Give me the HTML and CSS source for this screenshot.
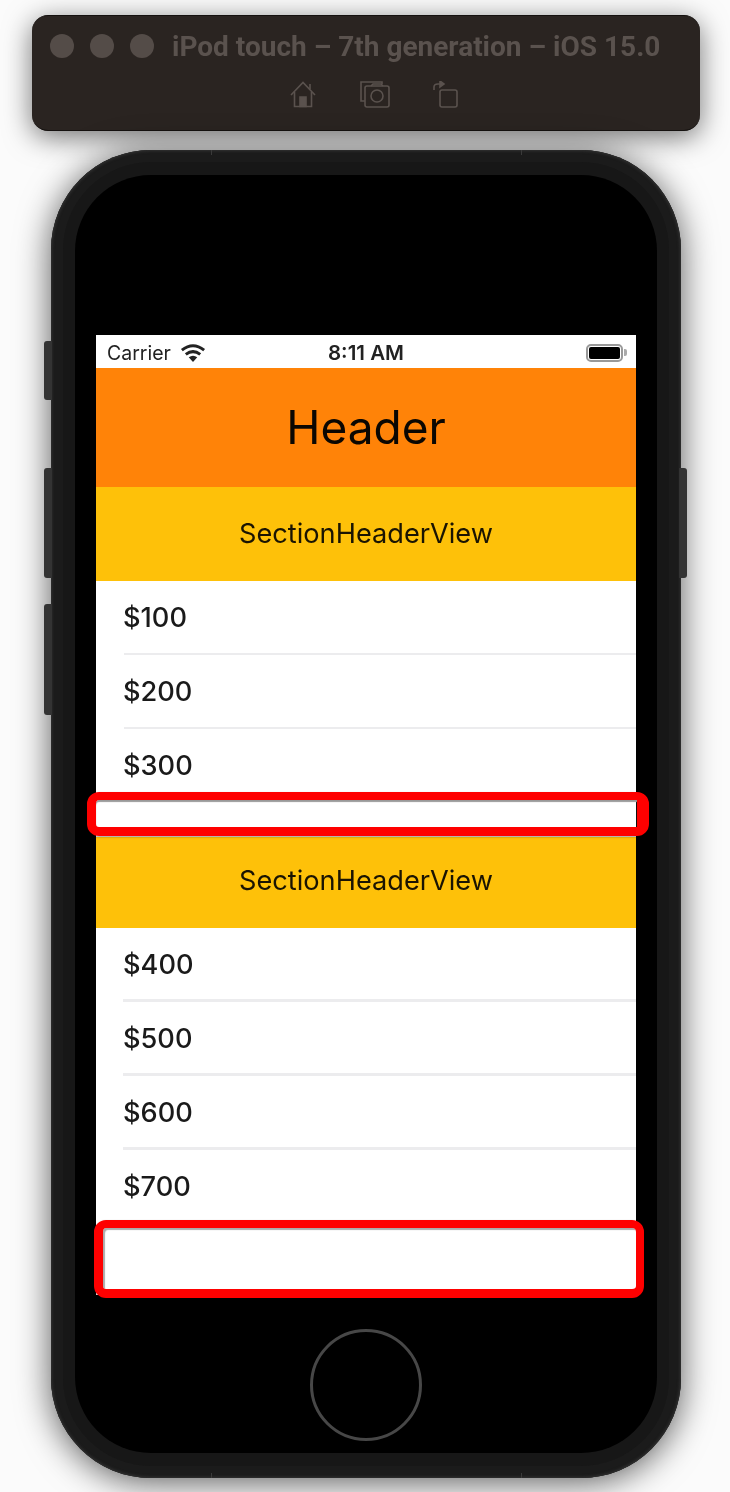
FILE: index.html
```html
<!DOCTYPE html>
<html>
<head>
    <meta charset="utf-8">
    <title>iPod touch simulator</title>
    <link rel="stylesheet" href="styles.css">
</head>
<body>

    <div class="titlebar">
        <div class="title-row">
            <div class="dots">
                <span class="dot"></span>
                <span class="dot"></span>
                <span class="dot"></span>
            </div>
            <div class="title">iPod touch – 7th generation – iOS 15.0</div>
        </div>
        <div class="tools">
            <svg class="tool tool-home" viewBox="0 0 26 27" fill="none" stroke="#5a524e" stroke-width="1.6">
                <path d="M1 14 L13 1.5 L25 14"/>
                <path d="M20 3 V8"/>
                <path d="M4.5 11 V25.5 H21.5 V11"/>
                <path d="M10 25.5 V16 H16 V25.5 Z" fill="#5a524e"/>
            </svg>
            <svg class="tool tool-camera" viewBox="0 0 30 27" fill="none" stroke="#5a524e" stroke-width="1.6">
                <path d="M22 3 V1 H1 V20 H5"/>
                <rect x="5" y="5" width="24" height="21" rx="2"/>
                <path d="M11 5 L13 3 H21 L23 5"/>
                <circle cx="17" cy="15" r="6"/>
            </svg>
            <svg class="tool tool-rotate" viewBox="0 0 25 27" fill="none" stroke="#5a524e" stroke-width="1.6">
                <rect x="7" y="9" width="17" height="17" rx="2"/>
                <path d="M1 9 V6 Q1 3 5 3 H7"/>
                <path d="M7 0 L11 3 L7 6 Z" fill="#5a524e"/>
            </svg>
        </div>
    </div>

    <div class="device">
        <span class="side side-mute"></span>
        <span class="side side-up"></span>
        <span class="side side-down"></span>
        <span class="side side-power"></span>
        <span class="tick tick-tl"></span>
        <span class="tick tick-tr"></span>
        <span class="tick tick-bl"></span>
        <span class="tick tick-br"></span>

        <div class="bezel">
            <div class="screen">
                <div class="statusbar">
                    <div class="carrier">
                        Carrier
                        <svg class="wifi" viewBox="0 0 24 17">
                            <path d="M12 17 L8 12.6 Q12 9.6 16 12.6 Z" fill="#222"/>
                            <path d="M5.2 9.8 Q12 4.6 18.8 9.8" fill="none" stroke="#222" stroke-width="2.8"/>
                            <path d="M1.5 5.8 Q12 -2.4 22.5 5.8" fill="none" stroke="#222" stroke-width="2.8"/>
                        </svg>
                    </div>
                    <div class="clock">8:11 AM</div>
                    <div class="battery"><span class="battery-fill"></span></div>
                </div>

                <div class="table-header">Header</div>

                <div class="section-header">SectionHeaderView</div>
                <div class="row"><span class="amount">$100</span></div>
                <div class="row"><span class="amount">$200</span></div>
                <div class="row row-last"><span class="amount">$300</span></div>
                <div class="section-footer section-footer-1"></div>

                <div class="section-header section-header-2">SectionHeaderView</div>
                <div class="row row-thick"><span class="amount">$400</span></div>
                <div class="row row-thick"><span class="amount">$500</span></div>
                <div class="row row-thick"><span class="amount">$600</span></div>
                <div class="row row-last"><span class="amount">$700</span></div>
                <div class="section-footer section-footer-2"></div>
            </div>

            <div class="home-button"></div>
        </div>

        <div class="mark mark-1"></div>
        <div class="mark mark-2"></div>
    </div>

</body>
</html>
```

FILE: styles.css
```css
html, body {
    margin: 0;
    padding: 0;
}

body {
    width: 730px;
    height: 1492px;
    overflow: hidden;
    background: #fbfbfb;
    font-family: Inter, "Liberation Sans", sans-serif;
    color: #111;
}

.titlebar {
    box-sizing: border-box;
    width: 668px;
    height: 116px;
    margin: 15px 0 0 32px;
    padding-top: 18px;
    background: #2a2421;
    border-top: 1px solid #15110f;
    border-bottom: 1px solid #15110f;
    border-radius: 16px;
    box-shadow: 0 6px 28px rgba(0, 0, 0, 0.55);
}

.title-row {
    display: flex;
    align-items: center;
    padding-left: 18px;
    height: 24px;
}

.dots {
    display: flex;
    gap: 16px;
    margin-right: 18px;
}

.dot {
    width: 24px;
    height: 24px;
    border-radius: 50%;
    background: #544c48;
}

.title {
    font-family: Roboto, sans-serif;
    font-size: 28px;
    font-weight: 700;
    color: #5a524e;
    white-space: nowrap;
    filter: blur(0.7px);
}

.tools {
    display: flex;
    justify-content: flex-start;
    margin: 23px 0 0 258px;
}

.tool {
    height: 27px;
    filter: blur(0.4px);
}

.tool-home {
    width: 26px;
}

.tool-camera {
    width: 30px;
    margin-left: 44px;
}

.tool-rotate {
    width: 25px;
    margin-left: 43px;
}

.device {
    position: relative;
    box-sizing: border-box;
    width: 630px;
    height: 1328px;
    margin: 19px 0 0 51px;
    padding: 25px 24px 24px;
    background: #171717;
    border-radius: 100px;
    box-shadow: inset 0 0 3px 1px #333, inset 0 0 0 12px #1b1b1b, 0 4px 34px rgba(0, 0, 0, 0.65);
}

.side {
    position: absolute;
    width: 8px;
    background: #333;
}

.side-mute {
    left: -7px;
    top: 191px;
    height: 59px;
    border-radius: 3px 0 0 3px;
}

.side-up {
    left: -7px;
    top: 318px;
    height: 110px;
    border-radius: 3px 0 0 3px;
}

.side-down {
    left: -7px;
    top: 454px;
    height: 111px;
    border-radius: 3px 0 0 3px;
}

.side-power {
    right: -6px;
    top: 318px;
    height: 110px;
    border-radius: 0 3px 3px 0;
}

.tick {
    position: absolute;
    width: 1px;
    height: 5px;
    background: #3a3a3a;
}

.tick-tl {
    left: 160px;
    top: 0;
}

.tick-tr {
    left: 470px;
    top: 0;
}

.tick-bl {
    left: 160px;
    bottom: 0;
}

.tick-br {
    left: 470px;
    bottom: 0;
}

.bezel {
    box-sizing: border-box;
    width: 582px;
    height: 1278px;
    padding: 160px 21px 0;
    background: #000;
    border-radius: 76px;
}

.screen {
    width: 540px;
    height: 960px;
    background: #fff;
}

.statusbar {
    box-sizing: border-box;
    display: flex;
    align-items: center;
    position: relative;
    height: 33px;
    padding: 2px 13px 0 11px;
    font-size: 19.5px;
    color: #222;
    justify-content: space-between;
}

.carrier {
    display: flex;
    align-items: center;
    gap: 9px;
    filter: blur(0.5px);
}

.wifi {
    width: 26px;
    height: 18px;
}

.clock {
    position: absolute;
    left: 232px;
    font-size: 20.5px;
    font-weight: 600;
    filter: blur(0.5px);
}

.battery {
    position: relative;
    box-sizing: border-box;
    width: 37px;
    height: 18px;
    padding: 1px;
    border: 2px solid #999;
    border-radius: 5px;
    filter: blur(0.4px);
}

.battery::after {
    content: "";
    position: absolute;
    right: -6px;
    top: 3px;
    width: 3px;
    height: 7px;
    background: #aaa;
    border-radius: 0 2px 2px 0;
}

.battery-fill {
    display: block;
    height: 100%;
    background: #000;
    border-radius: 2px;
}

.table-header {
    height: 119px;
    line-height: 119px;
    text-align: center;
    background: #ff8308;
    font-size: 46px;
    color: #0b0702;
    filter: blur(0.5px);
}

.section-header {
    height: 94px;
    line-height: 94px;
    text-align: center;
    background: #fec109;
    font-size: 27.2px;
    color: #1a1402;
    filter: blur(0.5px);
}

.section-header-2 {
    height: 91px;
    line-height: 88px;
}

.row {
    position: relative;
    box-sizing: border-box;
    height: 74px;
    padding: 17px 0 0 27px;
    font-size: 27.2px;
    font-weight: 500;
    line-height: 40px;
    color: #1a1a1a;
}

.amount {
    display: block;
    filter: blur(0.5px);
}

.row::after {
    content: "";
    position: absolute;
    left: 28px;
    right: 0;
    bottom: 0;
    height: 2px;
    background: #ececee;
}

.row-thick::after {
    height: 3px;
    left: 27px;
}

.row-last {
    height: 67px;
}

.row-last::after {
    display: none;
}

.section-footer-1 {
    height: 41px;
}

.section-footer-2 {
    height: 73px;
}

.home-button {
    box-sizing: border-box;
    width: 112px;
    height: 112px;
    margin: 34px 0 0 214px;
    border: 3px solid #474747;
    border-radius: 50%;
    filter: blur(0.4px);
}

.mark {
    position: absolute;
    box-sizing: border-box;
    border: solid #fe0000;
    border-radius: 12px;
    box-shadow: inset 0 2px 1px #999, 0 1px 2px rgba(0, 0, 0, 0.4);
}

.mark-1 {
    left: 36px;
    top: 642px;
    width: 562px;
    height: 44px;
    border-width: 8px 12px 9px 9px;
}

.mark-2 {
    left: 43px;
    top: 1070px;
    width: 550px;
    height: 78px;
    border-width: 8px 8px 9px 9px;
    box-shadow: inset 2px 2px 1px #aaa, 0 1px 2px rgba(0, 0, 0, 0.4);
}
```
